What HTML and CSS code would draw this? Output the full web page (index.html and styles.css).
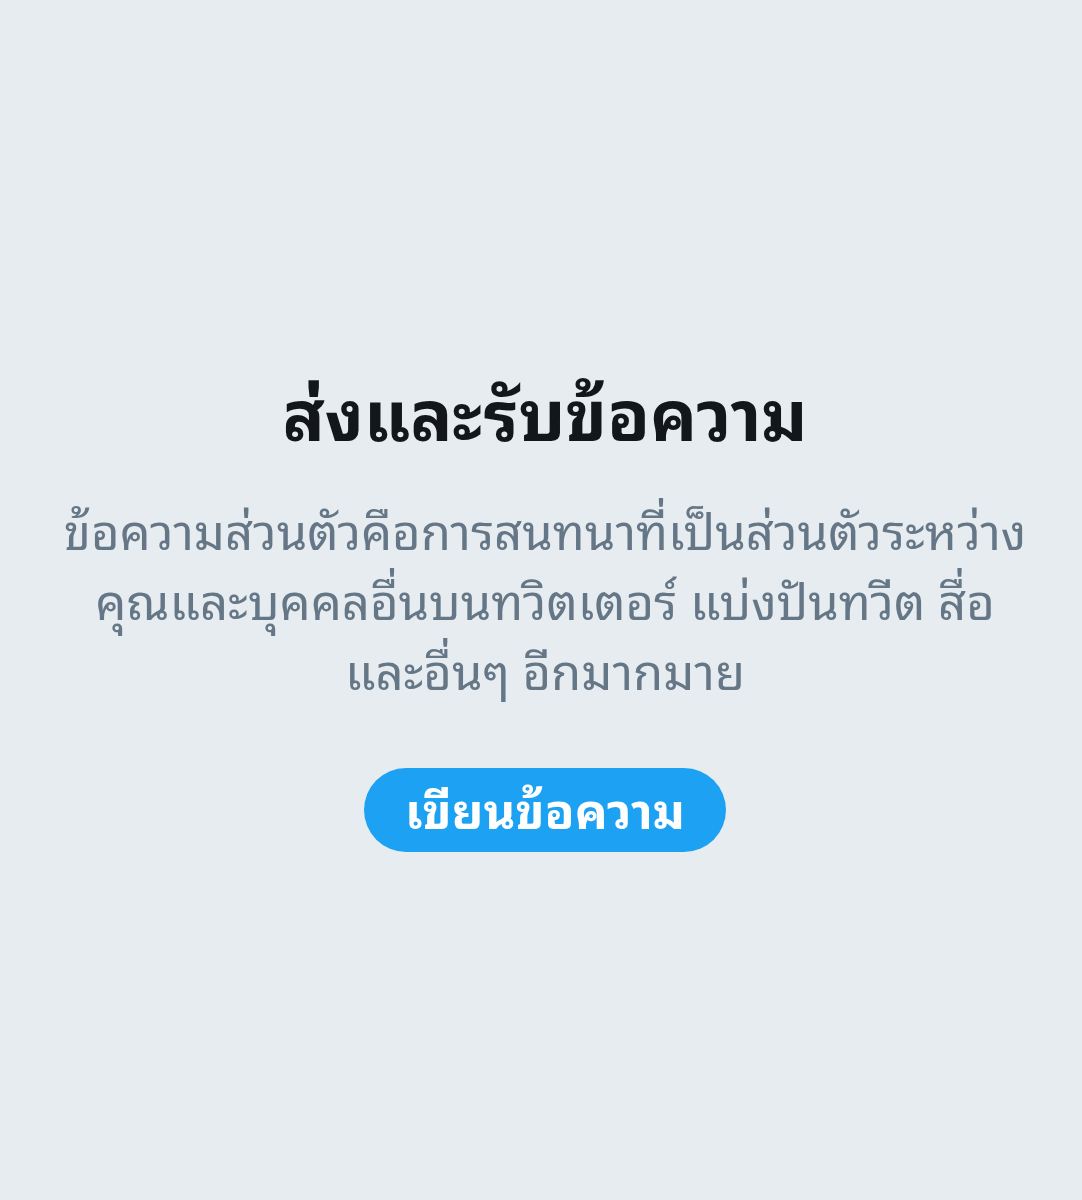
FILE: index.html
```html
<!DOCTYPE html>
<html lang="th">
<head>
<meta charset="utf-8">
<link rel="stylesheet" href="styles.css">
</head>
<body>
<main class="page">
  <section class="empty">
    <h1 class="title">ส่งและรับข้อความ</h1>
    <p class="desc">ข้อความส่วนตัวคือการสนทนาที่เป็นส่วนตัวระหว่างคุณและบุคคลอื่นบนทวิตเตอร์ แบ่งปันทวีต สื่อและอื่นๆ อีกมากมาย</p>
    <button class="btn">เขียนข้อความ</button>
  </section>
</main>
</body>
</html>
```

FILE: styles.css
```css
html, body {
  margin: 0;
  padding: 0;
}
body {
  background: #e6ecf0;
  font-family: "Noto Sans Thai Looped", "Noto Sans Thai", "Noto Sans", sans-serif;
}
.page {
  height: 1200px;
  box-sizing: border-box;
  padding: 365px 0 0 8px;
  display: flex;
  justify-content: center;
  align-items: flex-start;
}
.empty {
  display: flex;
  flex-direction: column;
  align-items: center;
  text-align: center;
}
.title {
  margin: 0;
  font-size: 70px;
  font-weight: 700;
  color: #14171a;
  line-height: 90px;
}
.desc {
  width: 972px;
  margin: 38px 0 0;
  font-size: 49px;
  line-height: 70px;
  color: #657786;
}
.btn {
  margin-top: 65px;
  box-sizing: border-box;
  border: 0;
  border-radius: 42px;
  background: #1da1f2;
  color: #fff;
  font-family: inherit;
  font-size: 49px;
  font-weight: 700;
  line-height: 78px;
  height: 84px;
  padding: 0 41px 6px;
}
```
